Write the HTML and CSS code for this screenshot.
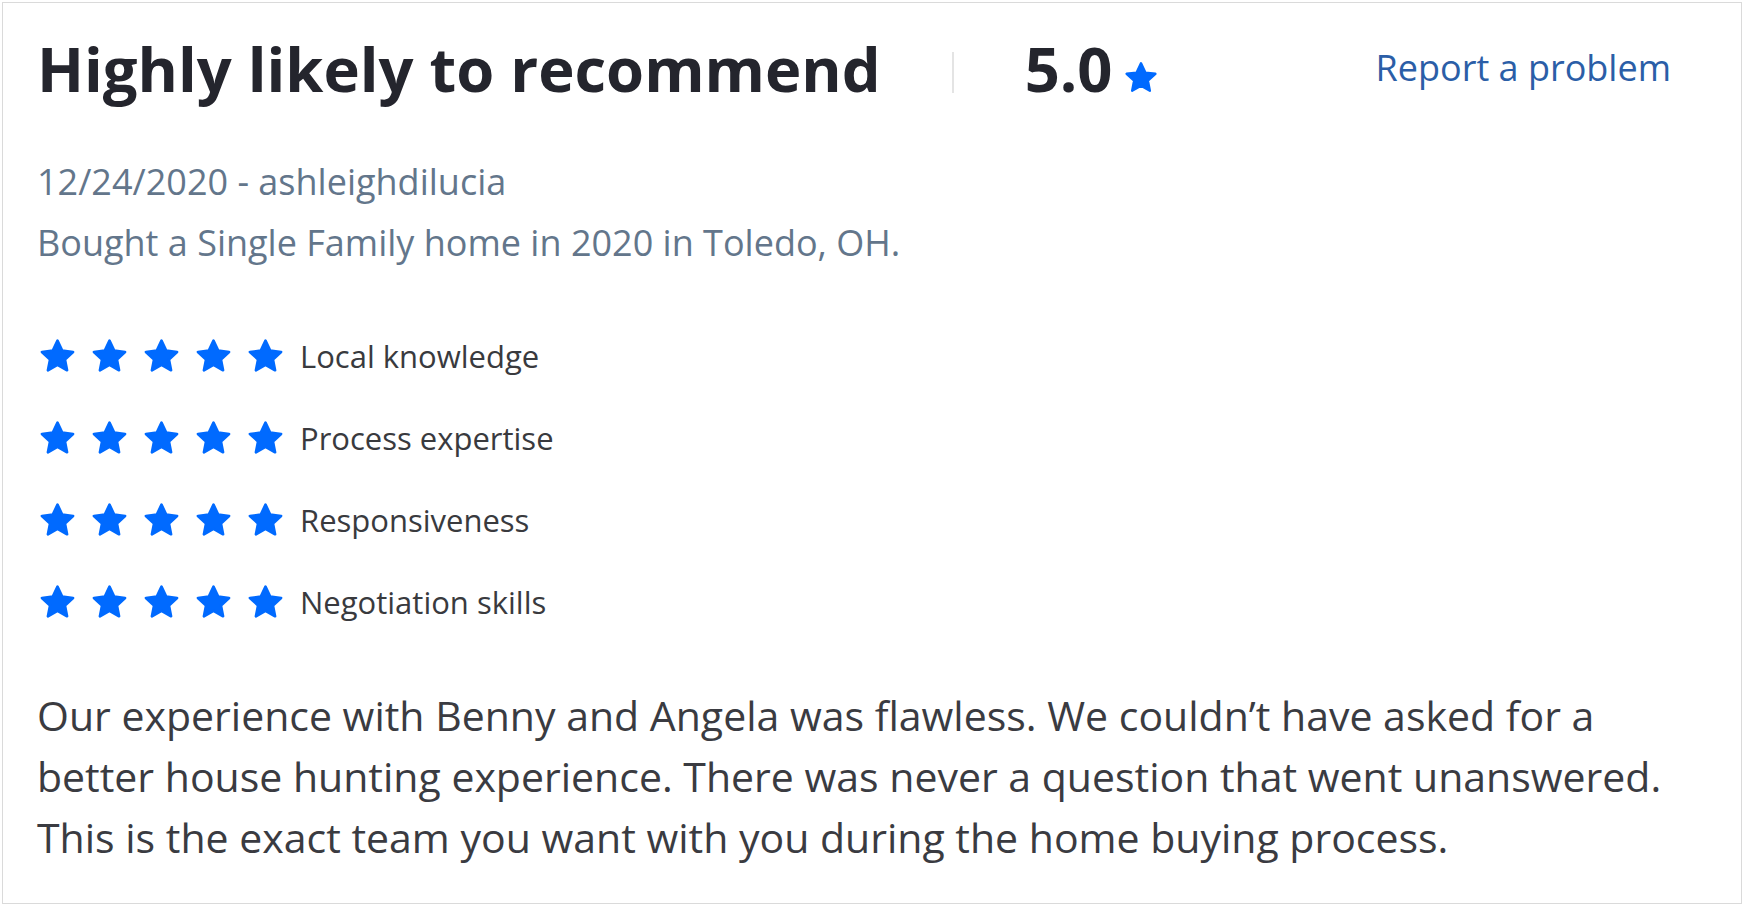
FILE: index.html
```html
<!DOCTYPE html>
<html lang="en">
<head>
<meta charset="utf-8">
<title>Review</title>
<link rel="stylesheet" href="styles.css">
</head>
<body>
<div class="card">
  <div class="header">
    <h2 class="title">Highly likely to recommend</h2>
    <span class="sep"></span>
    <div class="overall">
      <span class="score">5.0</span>
      <svg class="star star-sm" viewBox="0 0 24 24"><polygon points="12,2.2 14.9,8.4 21.6,9.2 16.6,13.8 17.9,20.5 12,17.1 6.1,20.5 7.4,13.8 2.4,9.2 9.1,8.4"/></svg>
    </div>
    <a class="report" href="#">Report a problem</a>
  </div>

  <div class="meta">
    <div>12/24/2020 - ashleighdilucia</div>
    <div>Bought a Single Family home in 2020 in Toledo, OH.</div>
  </div>

  <div class="ratings">
    <div class="row">
      <div class="stars">
        <svg class="star" viewBox="0 0 24 24"><polygon points="12,2.2 14.9,8.4 21.6,9.2 16.6,13.8 17.9,20.5 12,17.1 6.1,20.5 7.4,13.8 2.4,9.2 9.1,8.4"/></svg>
        <svg class="star" viewBox="0 0 24 24"><polygon points="12,2.2 14.9,8.4 21.6,9.2 16.6,13.8 17.9,20.5 12,17.1 6.1,20.5 7.4,13.8 2.4,9.2 9.1,8.4"/></svg>
        <svg class="star" viewBox="0 0 24 24"><polygon points="12,2.2 14.9,8.4 21.6,9.2 16.6,13.8 17.9,20.5 12,17.1 6.1,20.5 7.4,13.8 2.4,9.2 9.1,8.4"/></svg>
        <svg class="star" viewBox="0 0 24 24"><polygon points="12,2.2 14.9,8.4 21.6,9.2 16.6,13.8 17.9,20.5 12,17.1 6.1,20.5 7.4,13.8 2.4,9.2 9.1,8.4"/></svg>
        <svg class="star" viewBox="0 0 24 24"><polygon points="12,2.2 14.9,8.4 21.6,9.2 16.6,13.8 17.9,20.5 12,17.1 6.1,20.5 7.4,13.8 2.4,9.2 9.1,8.4"/></svg>
      </div>
      <span class="label">Local knowledge</span>
    </div>
    <div class="row">
      <div class="stars">
        <svg class="star" viewBox="0 0 24 24"><polygon points="12,2.2 14.9,8.4 21.6,9.2 16.6,13.8 17.9,20.5 12,17.1 6.1,20.5 7.4,13.8 2.4,9.2 9.1,8.4"/></svg>
        <svg class="star" viewBox="0 0 24 24"><polygon points="12,2.2 14.9,8.4 21.6,9.2 16.6,13.8 17.9,20.5 12,17.1 6.1,20.5 7.4,13.8 2.4,9.2 9.1,8.4"/></svg>
        <svg class="star" viewBox="0 0 24 24"><polygon points="12,2.2 14.9,8.4 21.6,9.2 16.6,13.8 17.9,20.5 12,17.1 6.1,20.5 7.4,13.8 2.4,9.2 9.1,8.4"/></svg>
        <svg class="star" viewBox="0 0 24 24"><polygon points="12,2.2 14.9,8.4 21.6,9.2 16.6,13.8 17.9,20.5 12,17.1 6.1,20.5 7.4,13.8 2.4,9.2 9.1,8.4"/></svg>
        <svg class="star" viewBox="0 0 24 24"><polygon points="12,2.2 14.9,8.4 21.6,9.2 16.6,13.8 17.9,20.5 12,17.1 6.1,20.5 7.4,13.8 2.4,9.2 9.1,8.4"/></svg>
      </div>
      <span class="label">Process expertise</span>
    </div>
    <div class="row">
      <div class="stars">
        <svg class="star" viewBox="0 0 24 24"><polygon points="12,2.2 14.9,8.4 21.6,9.2 16.6,13.8 17.9,20.5 12,17.1 6.1,20.5 7.4,13.8 2.4,9.2 9.1,8.4"/></svg>
        <svg class="star" viewBox="0 0 24 24"><polygon points="12,2.2 14.9,8.4 21.6,9.2 16.6,13.8 17.9,20.5 12,17.1 6.1,20.5 7.4,13.8 2.4,9.2 9.1,8.4"/></svg>
        <svg class="star" viewBox="0 0 24 24"><polygon points="12,2.2 14.9,8.4 21.6,9.2 16.6,13.8 17.9,20.5 12,17.1 6.1,20.5 7.4,13.8 2.4,9.2 9.1,8.4"/></svg>
        <svg class="star" viewBox="0 0 24 24"><polygon points="12,2.2 14.9,8.4 21.6,9.2 16.6,13.8 17.9,20.5 12,17.1 6.1,20.5 7.4,13.8 2.4,9.2 9.1,8.4"/></svg>
        <svg class="star" viewBox="0 0 24 24"><polygon points="12,2.2 14.9,8.4 21.6,9.2 16.6,13.8 17.9,20.5 12,17.1 6.1,20.5 7.4,13.8 2.4,9.2 9.1,8.4"/></svg>
      </div>
      <span class="label">Responsiveness</span>
    </div>
    <div class="row">
      <div class="stars">
        <svg class="star" viewBox="0 0 24 24"><polygon points="12,2.2 14.9,8.4 21.6,9.2 16.6,13.8 17.9,20.5 12,17.1 6.1,20.5 7.4,13.8 2.4,9.2 9.1,8.4"/></svg>
        <svg class="star" viewBox="0 0 24 24"><polygon points="12,2.2 14.9,8.4 21.6,9.2 16.6,13.8 17.9,20.5 12,17.1 6.1,20.5 7.4,13.8 2.4,9.2 9.1,8.4"/></svg>
        <svg class="star" viewBox="0 0 24 24"><polygon points="12,2.2 14.9,8.4 21.6,9.2 16.6,13.8 17.9,20.5 12,17.1 6.1,20.5 7.4,13.8 2.4,9.2 9.1,8.4"/></svg>
        <svg class="star" viewBox="0 0 24 24"><polygon points="12,2.2 14.9,8.4 21.6,9.2 16.6,13.8 17.9,20.5 12,17.1 6.1,20.5 7.4,13.8 2.4,9.2 9.1,8.4"/></svg>
        <svg class="star" viewBox="0 0 24 24"><polygon points="12,2.2 14.9,8.4 21.6,9.2 16.6,13.8 17.9,20.5 12,17.1 6.1,20.5 7.4,13.8 2.4,9.2 9.1,8.4"/></svg>
      </div>
      <span class="label">Negotiation skills</span>
    </div>
  </div>

  <p class="body">Our experience with Benny and Angela was flawless. We couldn’t have asked for a better house hunting experience. There was never a question that went unanswered. This is the exact team you want with you during the home buying process.</p>
</div>
</body>
</html>
```

FILE: styles.css
```css
* { box-sizing: border-box; }
html, body { margin: 0; padding: 0; background: #ffffff; }
body { font-family: "Open Sans", "Noto Sans", "Liberation Sans", sans-serif; }

.card {
  margin: 2px 0 0 2px;
  width: 1740px;
  height: 902px;
  border: 1px solid #dadada;
  padding: 25px 70px 0 34px;
  background: #fff;
}

.header {
  display: flex;
  align-items: flex-start;
  height: 80px;
}
.title {
  margin: 0;
  font-size: 61.5px;
  font-weight: 700;
  line-height: 80px;
  color: #24252d;
  letter-spacing: 0;
}
.sep {
  width: 2px;
  height: 41px;
  margin: 24px 71px 0 71px;
  background: #e4e4e4;
}
.overall {
  display: flex;
  align-items: flex-start;
}
.score {
  font-size: 61.5px;
  font-weight: 700;
  line-height: 80px;
  color: #24252d;
}
.star {
  width: 39px;
  height: 39px;
  fill: #006aff;
  stroke: #006aff;
  stroke-width: 1.6;
  stroke-linejoin: round;
  display: block;
}
.star-sm {
  width: 36px;
  height: 36px;
  margin: 32px 0 0 10px;
}
.report {
  margin-left: auto;
  font-size: 36px;
  line-height: 80px;
  color: #2b5ea7;
  text-decoration: none;
}

.meta {
  margin-top: 43px;
  font-size: 36px;
  line-height: 61px;
  color: #63768b;
}

.ratings {
  margin-top: 42px;
}
.row {
  display: flex;
  align-items: center;
  height: 82px;
}
.stars {
  display: flex;
  gap: 13px;
  margin-left: 1px;
}
.label {
  margin-left: 15px;
  font-size: 31px;
  color: #393a3e;
}

.body {
  margin: 42px 0 0 0;
  font-size: 41px;
  line-height: 61px;
  color: #3a3b41;
}
```
